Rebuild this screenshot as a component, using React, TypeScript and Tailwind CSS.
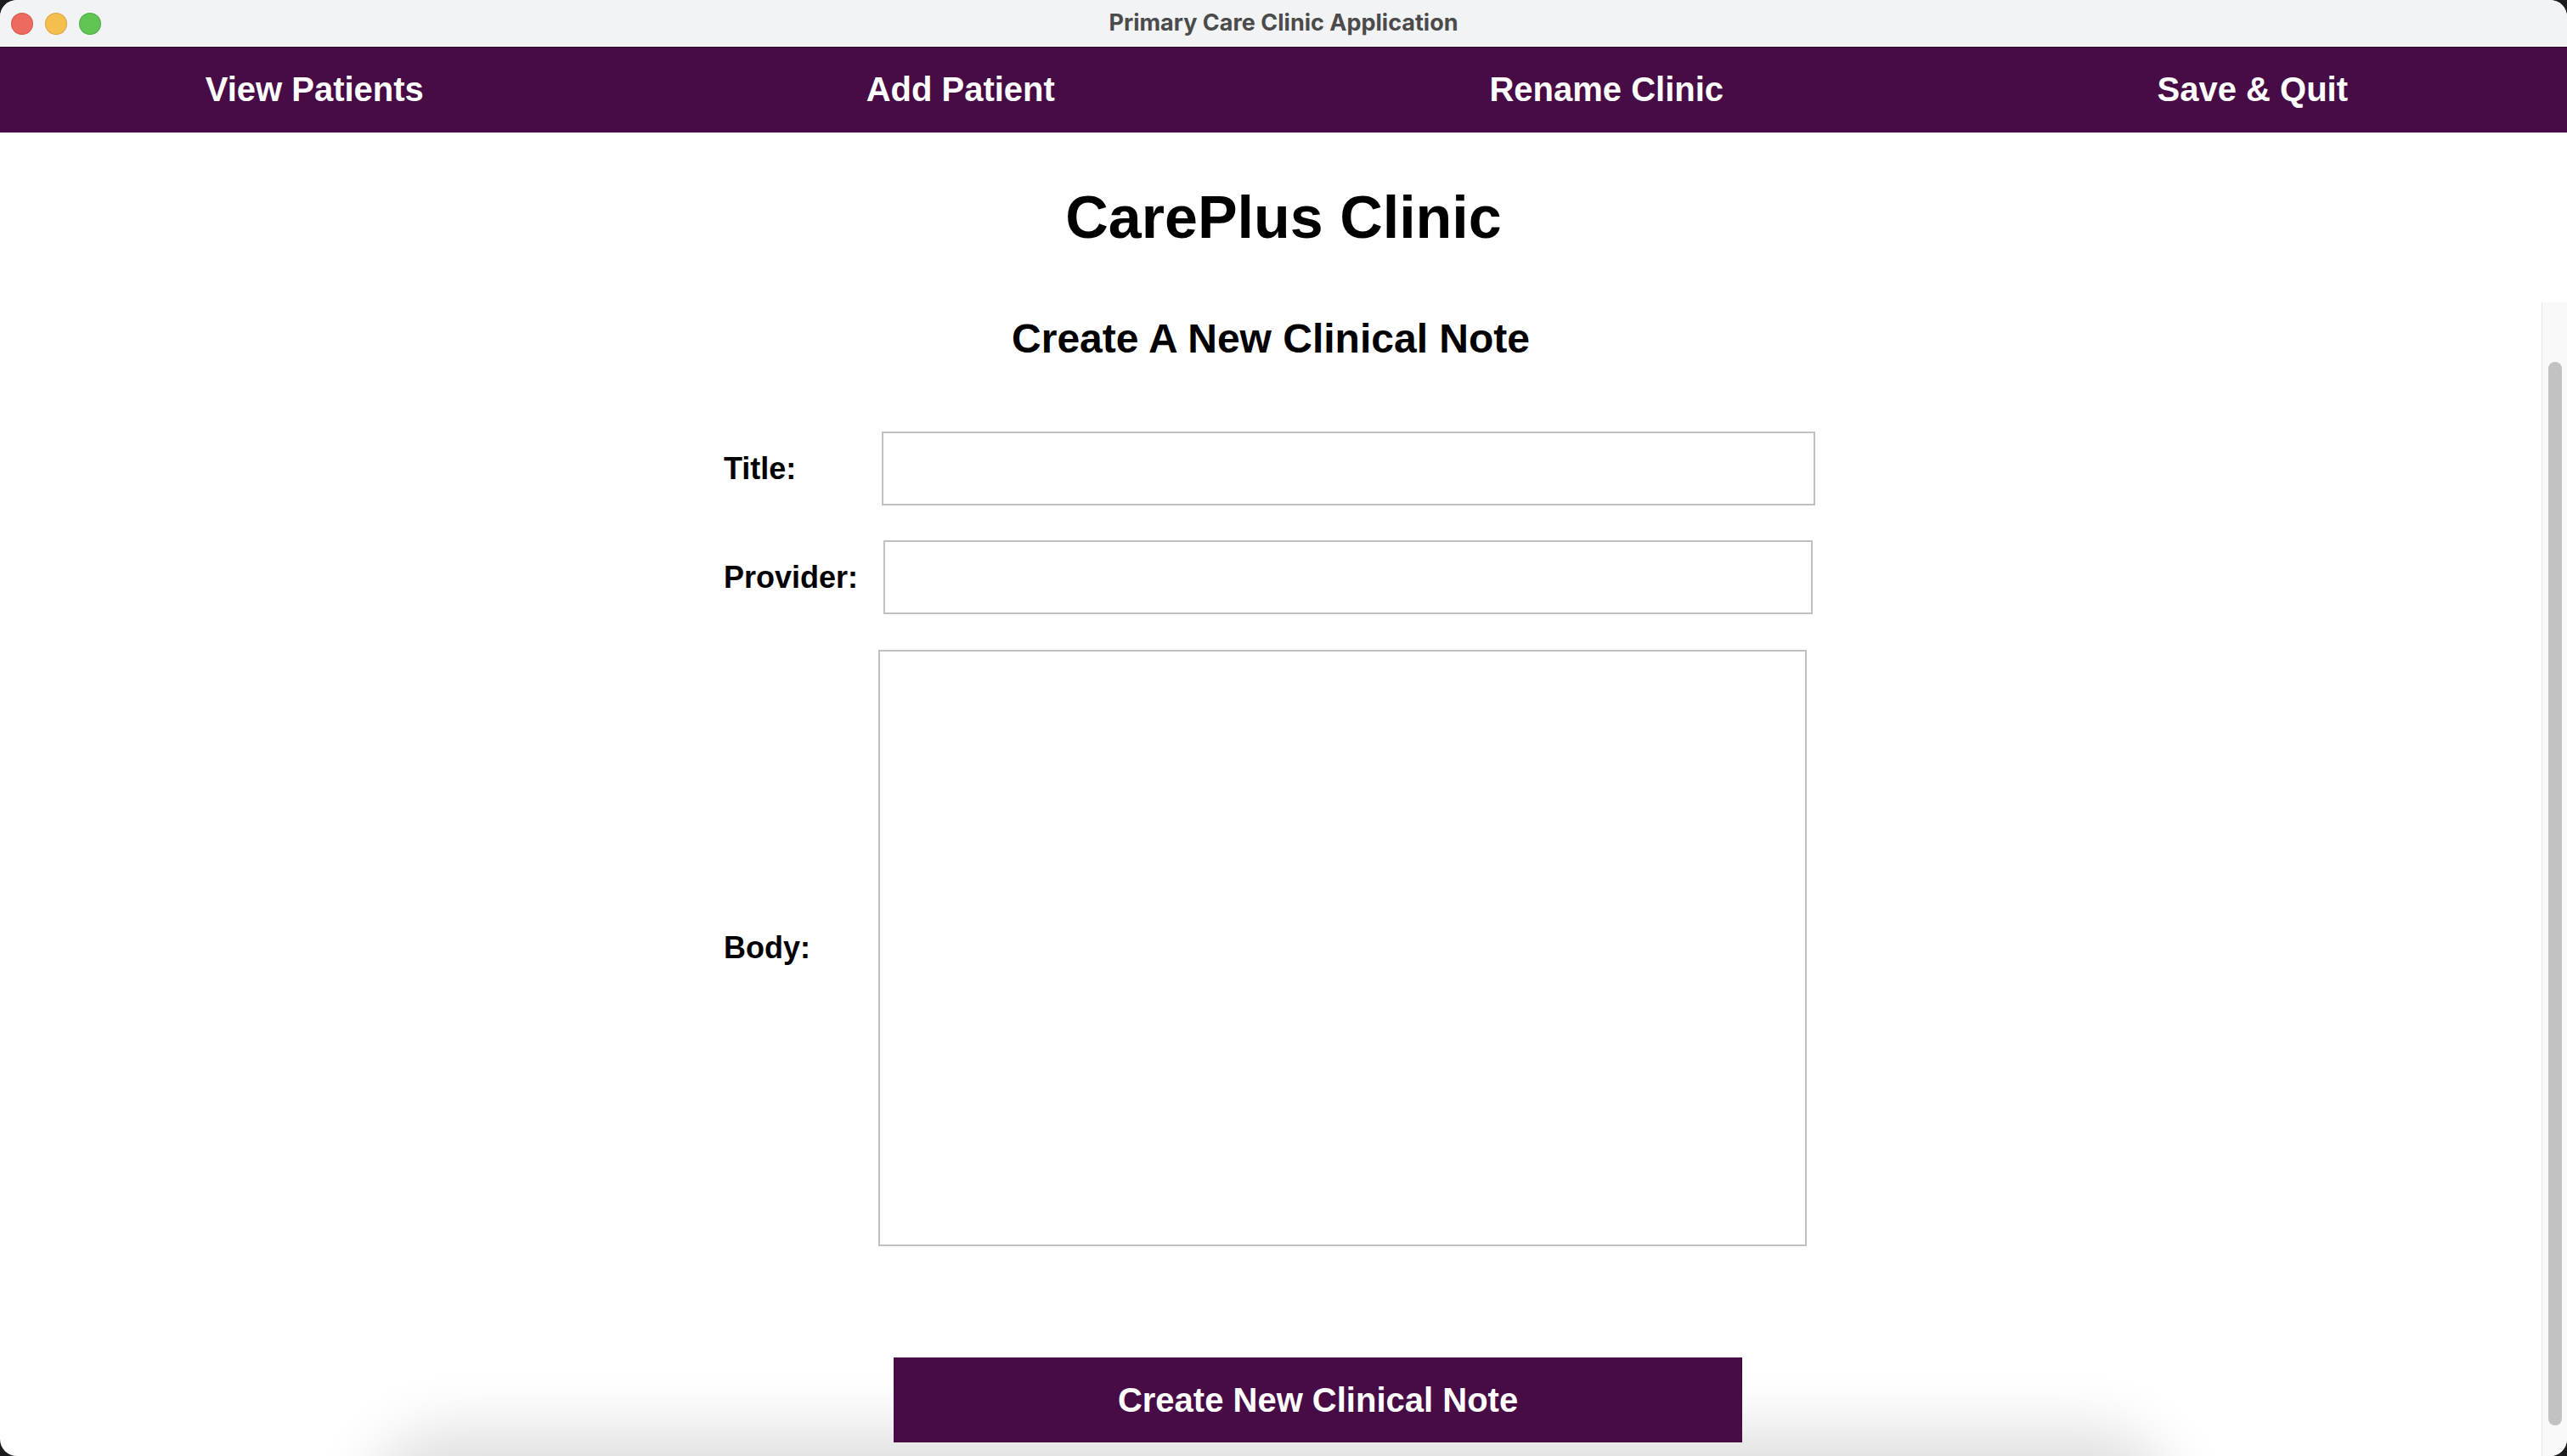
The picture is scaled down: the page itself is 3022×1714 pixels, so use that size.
const navItems = ["View Patients", "Add Patient", "Rename Clinic", "Save & Quit"];

function TrafficLights() {
  return (
    <div className="absolute left-[14px] top-[16px] flex gap-[16px]">
      <div className="h-[24px] w-[24px] rounded-full bg-[#ed6a5e] ring-1 ring-[#d5564b]"></div>
      <div className="h-[24px] w-[24px] rounded-full bg-[#f5bf4f] ring-1 ring-[#d9a23a]"></div>
      <div className="h-[24px] w-[24px] rounded-full bg-[#61c554] ring-1 ring-[#4ea843]"></div>
    </div>
  );
}

export default function App() {
  return (
    <div className="h-[1714px] w-[3022px] overflow-hidden bg-[#1c1c1e]">
      <div className="relative flex h-full w-full flex-col overflow-hidden rounded-[20px] bg-white font-['Liberation_Sans',Arial,sans-serif]">
        {/* title bar */}
        <div className="relative flex h-[56px] shrink-0 items-center justify-center border-b border-[#2a0a27] bg-[#f2f3f5]">
          <TrafficLights />
          <span className="font-['Inter',sans-serif] text-[27px] font-bold text-[#4b4b4b]">
            Primary Care Clinic Application
          </span>
        </div>

        {/* nav */}
        <div className="-ml-[10px] grid h-[100px] w-[3042px] shrink-0 grid-cols-4 items-center bg-[#470c45] pb-[2px]">
          {navItems.map((item) => (
            <div key={item} className="text-center text-[40px] font-bold text-white">
              {item}
            </div>
          ))}
        </div>

        {/* clinic name */}
        <div className="flex h-[200px] shrink-0 items-center justify-center">
          <h1 className="text-[70px] font-bold leading-none text-black">CarePlus Clinic</h1>
        </div>

        {/* bottom window shadow */}
        <div className="pointer-events-none absolute left-[470px] right-[500px] top-[1722px] z-0 h-[120px] rounded-[60px] shadow-[0_0_70px_40px_rgba(0,0,0,0.13)]"></div>

        {/* scroll area */}
        <div className="relative z-10 flex min-h-0 flex-1">
          <div className="flex-1">
            <h2 className="mt-[15px] text-center text-[48px] font-bold leading-[56px] text-black">
              Create A New Clinical Note
            </h2>

            <div className="ml-[852px] mt-[81px] flex flex-col">
              <div className="flex h-[87px] items-center">
                <label className="w-[186px] text-[36px] font-bold text-black">Title:</label>
                <div className="h-[87px] w-[1099px] border-2 border-[#c0c0c0] bg-white"></div>
              </div>
              <div className="mt-[41px] flex h-[87px] items-center">
                <label className="w-[188px] text-[36px] font-bold text-black">Provider:</label>
                <div className="h-[87px] w-[1094px] border-2 border-[#c0c0c0] bg-white"></div>
              </div>
              <div className="mt-[42px] flex h-[702px] items-center">
                <label className="w-[182px] text-[36px] font-bold text-black">Body:</label>
                <div className="h-[702px] w-[1093px] border-2 border-[#c0c0c0] bg-white"></div>
              </div>
            </div>

            <button className="ml-[1052px] mt-[131px] flex h-[100px] w-[999px] items-center justify-center bg-[#470c45] text-[40px] font-bold text-white">
              Create New Clinical Note
            </button>
          </div>

          {/* scrollbar */}
          <div className="w-[30px] shrink-0 border-l border-[#e6e6e6] bg-[#f9f9f9] pl-[7px] pt-[70px]">
            <div className="h-[1252px] w-[16px] rounded-full bg-[#c2c2c2]"></div>
          </div>
        </div>
      </div>
    </div>
  );
}
